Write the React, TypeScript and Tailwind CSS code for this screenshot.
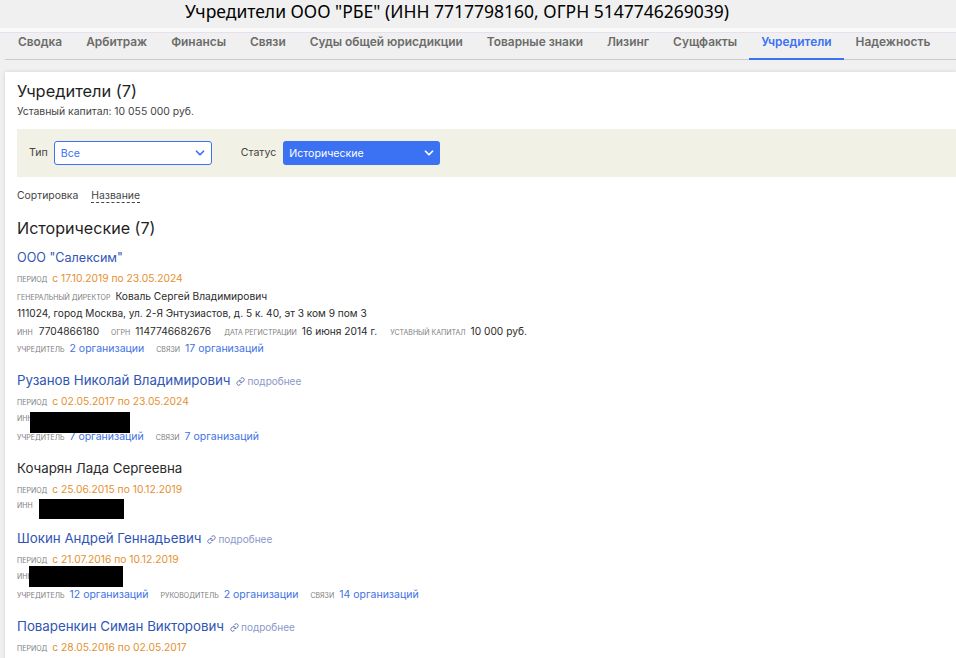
import { ChevronDown, Link as LinkIcon } from "lucide-react";

const tabs = ["Сводка", "Арбитраж", "Финансы", "Связи", "Суды общей юрисдикции", "Товарные знаки", "Лизинг", "Сущфакты", "Учредители", "Надежность"];

function Label({ children }: { children: React.ReactNode }) {
  return <span className="text-[7px] uppercase text-[#7d7d7d] mr-[5px]">{children}</span>;
}

function Period({ text }: { text: string }) {
  return (
    <div className="h-[17px] flex items-baseline leading-[17px] whitespace-nowrap">
      <Label>период</Label>
      <span className="text-[10.3px] text-[#e5902e]">{text}</span>
    </div>
  );
}

function Orgs({ items }: { items: [string, string][] }) {
  return (
    <div className="h-[17px] flex items-baseline gap-[12px] leading-[17px] whitespace-nowrap">
      {items.map(([label, value]) => (
        <span key={label} className="flex items-baseline">
          <Label>{label}</Label>
          <span className="text-[10.5px] text-[#4272e6]">{value}</span>
        </span>
      ))}
    </div>
  );
}

function Name({ children, more, link }: { children: React.ReactNode; more?: boolean; link?: boolean }) {
  return (
    <div className="h-[20px] mb-[2px] flex items-center whitespace-nowrap">
      <span className={`text-[13.3px] ${link ? "text-[#2f55b5]" : "text-[#2b2b2b]"}`}>{children}</span>
      {more && (
        <span className="ml-[6px] flex items-center gap-[2px] text-[10px] text-[#8a98c8]">
          <LinkIcon className="h-[9px] w-[9px] text-[#5f6fae]" strokeWidth={2.5} />
          подробнее
        </span>
      )}
    </div>
  );
}

function Inn({ box, className }: { box: string; className?: string }) {
  return (
    <div className={`relative h-[17px] flex items-center ${className ?? ""}`}>
      <Label>инн</Label>
      <div className={`absolute bg-black ${box}`} />
    </div>
  );
}

export default function App() {
  return (
    <div className="h-[658px] w-[956px] overflow-hidden bg-[#f0f0f0] font-['Inter',sans-serif] text-[#2b2b2b]">
      <div className="h-[28px] pr-[42px] text-center text-[17.5px] leading-[22px] text-black font-['Noto_Sans',sans-serif]">
        Учредители ООО "РБЕ" (ИНН 7717798160, ОГРН 5147746269039)
      </div>
      <div className="h-[4px] bg-[#fafafa]" />
      <div className="h-[1px] bg-[#e8dff0]" />
      <div className="ml-[5px] h-[27px] flex border-b border-[#cccccc] pl-[1px]">
        {tabs.map((tab) => (
          <div
            key={tab}
            className={`px-[12px] text-[11.9px] font-semibold leading-[18px] whitespace-nowrap ${
              tab === "Учредители" ? "text-[#3b71f3] border-b-2 border-[#3b71f3] -mb-px" : "text-[#6b6b6b]"
            }`}
          >
            {tab}
          </div>
        ))}
      </div>
      <div className="mt-[12px] ml-[5px] h-[600px] bg-white pl-[12px] pt-[8px] shadow-[0_0_4px_rgba(0,0,0,0.12)]">
        <div className="text-[16.4px] leading-[22px] text-[#1f1f1f]">Учредители (7)</div>
        <div className="text-[10.4px] leading-[14px] mt-[3px] text-[#444]">Уставный капитал: 10 055 000 руб.</div>

        <div className="mt-[10px] h-[48px] flex items-center bg-[#f2f1e6] pl-[12px] text-[10.6px] text-[#444]">
          <span className="mr-[6px]">Тип</span>
          <div className="h-[24px] w-[158px] flex items-center justify-between rounded-[3px] border border-[#3b71f3] bg-white pl-[6px] pr-[4px] text-[#3b71f3]">
            <span className="pt-[1px]">Все</span>
            <ChevronDown className="h-[14px] w-[14px]" strokeWidth={3} />
          </div>
          <span className="ml-[29px] mr-[7px]">Статус</span>
          <div className="h-[24px] w-[157px] flex items-center justify-between rounded-[3px] bg-[#3b71f3] pl-[6px] pr-[4px] text-white">
            <span className="pt-[1px]">Исторические</span>
            <ChevronDown className="h-[14px] w-[14px]" strokeWidth={3} />
          </div>
        </div>

        <div className="mt-[11px] h-[16px] flex items-center text-[10.4px] text-[#444]">
          <span>Сортировка</span>
          <span className="ml-[13px] border-b border-dashed border-[#444] leading-[12px]">Название</span>
        </div>

        <div className="mt-[13px] text-[16.1px] leading-[22px] text-[#1f1f1f]">Исторические (7)</div>

        <div className="mt-[9px]">
          <div className="h-[20px] mb-[2px] flex items-center text-[12.6px] text-[#2f55b5]">ООО "Салексим"</div>
          <Period text="с 17.10.2019 по 23.05.2024" />
          <div className="h-[18px] flex items-baseline leading-[18px] whitespace-nowrap">
            <Label>генеральный директор</Label>
            <span className="text-[10.2px]">Коваль Сергей Владимирович</span>
          </div>
          <div className="h-[17px] flex items-center text-[10.1px] whitespace-nowrap">111024, город Москва, ул. 2-Я Энтузиастов, д. 5 к. 40, эт 3 ком 9 пом 3</div>
          <div className="h-[18px] flex items-baseline leading-[18px] whitespace-nowrap text-[10.2px]">
            <Label>инн</Label>
            <span className="ml-[1px] mr-[12px]">7704866180</span>
            <Label>огрн</Label>
            <span className="mr-[13px]">1147746682676</span>
            <Label>дата регистрации</Label>
            <span className="mr-[13px]">16 июня 2014 г.</span>
            <Label>уставный капитал</Label>
            <span>10 000 руб.</span>
          </div>
          <Orgs items={[["учредитель", "2 организации"], ["связи", "17 организаций"]]} />
        </div>

        <div className="mt-[14px]">
          <Name link more>Рузанов Николай Владимирович</Name>
          <Period text="с 02.05.2017 по 23.05.2024" />
          <Inn className="mt-[1px]" box="left-[13px] top-[1px] h-[21px] w-[100px]" />
          <Orgs items={[["учредитель", "7 организаций"], ["связи", "7 организаций"]]} />
        </div>

        <div className="mt-[14px]">
          <Name>Кочарян Лада Сергеевна</Name>
          <div className="mt-[1px]" />
          <Period text="с 25.06.2015 по 10.12.2019" />
          <Inn box="left-[22px] top-[1px] h-[20px] w-[85px]" />
        </div>

        <div className="mt-[14px]">
          <Name link more>Шокин Андрей Геннадьевич</Name>
          <Period text="с 21.07.2016 по 10.12.2019" />
          <Inn className="mt-[1px]" box="left-[12px] -top-[3px] h-[21px] w-[94px]" />
          <Orgs items={[["учредитель", "12 организаций"], ["руководитель", "2 организации"], ["связи", "14 организаций"]]} />
        </div>

        <div className="mt-[14px]">
          <Name link more>Поваренкин Симан Викторович</Name>
          <div className="mt-[2px]" />
          <Period text="с 28.05.2016 по 02.05.2017" />
        </div>
      </div>
    </div>
  );
}
